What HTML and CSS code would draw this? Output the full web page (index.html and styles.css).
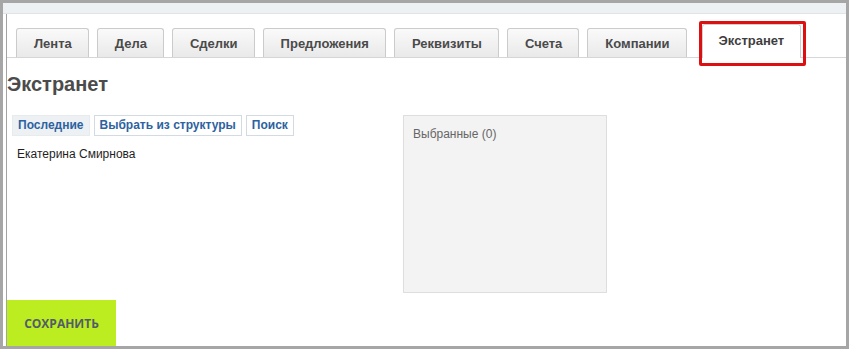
FILE: index.html
```html
<!DOCTYPE html>
<html lang="ru">
<head>
<meta charset="utf-8">
<title>Экстранет</title>
<link rel="stylesheet" href="styles.css">
</head>
<body>
<div class="window">
  <div class="topbar"></div>
  <div class="content">
    <div class="tabs">
      <div class="tab">Лента</div>
      <div class="tab">Дела</div>
      <div class="tab">Сделки</div>
      <div class="tab">Предложения</div>
      <div class="tab">Реквизиты</div>
      <div class="tab">Счета</div>
      <div class="tab">Компании</div>
      <div class="tab tab-active">Экстранет</div>
    </div>
    <h1 class="title">Экстранет</h1>
    <div class="selector">
      <div class="picker">
        <div class="modes">
          <span class="mode mode-active">Последние</span>
          <span class="mode">Выбрать из структуры</span>
          <span class="mode">Поиск</span>
        </div>
        <div class="person">Екатерина Смирнова</div>
      </div>
      <div class="chosen">Выбранные (0)</div>
    </div>
    <button class="save">СОХРАНИТЬ</button>
  </div>
</div>
</body>
</html>
```

FILE: styles.css
```css
* { box-sizing: border-box; }
html, body { margin: 0; padding: 0; background: #ffffff; }
body { font-family: "Liberation Sans", Arial, sans-serif; }

.window {
  width: 849px;
  height: 349px;
  border: 3px solid #a6a6a6;
  background: #ffffff;
  display: flex;
  flex-direction: column;
}

.topbar {
  height: 11px;
  background: #eef1f3;
  border-bottom: 1px solid #dfe4e7;
  flex: none;
}

.content {
  flex: 1;
  margin-left: 3px;
  border-left: 1px solid #a3a3a3;
  display: flex;
  flex-direction: column;
}

.tabs {
  height: 44px;
  flex: none;
  display: flex;
  align-items: flex-end;
  gap: 8px;
  padding-left: 9px;
  border-bottom: 1px solid #d4d7da;
}

.tab {
  height: 29px;
  line-height: 29px;
  padding: 0 16px 0 17px;
  border: 1px solid #cbcbcb;
  border-bottom: none;
  border-radius: 3px 3px 0 0;
  background: linear-gradient(#fafafa, #e9e9e9);
  font-size: 13px;
  font-weight: bold;
  color: #4a4a4a;
  white-space: nowrap;
}

.tab-active {
  position: relative;
  height: 34px;
  margin-bottom: -1px;
  margin-left: 7px;
  padding: 8px 16px 0 16px;
  line-height: 16px;
  background: #ffffff;
  border-color: #d0d0d0;
  color: #3e3e3e;
}

.tab-active::after {
  content: "";
  position: absolute;
  top: -4px;
  left: -4px;
  right: -6px;
  bottom: -8px;
  border: 3px solid #dc1010;
  border-radius: 2px;
}

.title {
  margin: 14px 0 0 0;
  height: 24px;
  font-size: 20px;
  line-height: 24px;
  font-weight: bold;
  color: #4b4b4b;
}

.selector {
  margin-top: 19px;
  height: 178px;
  flex: none;
  display: flex;
}

.picker {
  width: 396px;
  padding-left: 5px;
}

.modes {
  display: flex;
  gap: 4px;
  height: 21px;
}

.mode {
  height: 21px;
  line-height: 19px;
  padding: 0 5px;
  border: 1px solid #d2dbe1;
  background: #ffffff;
  font-size: 12px;
  font-weight: bold;
  color: #2c62a0;
}

.mode-active {
  background: #edf1f4;
  border-color: #e6ebee;
}

.person {
  margin-top: 10px;
  padding-left: 5px;
  font-size: 12px;
  line-height: 16px;
  color: #1f1f1f;
}

.chosen {
  width: 204px;
  height: 178px;
  background: #f3f3f3;
  border: 1px solid #dedede;
  padding: 10px 9px;
  font-size: 12px;
  line-height: 16px;
  color: #666666;
}

.save {
  margin-top: 7px;
  width: 109px;
  height: 46px;
  border: none;
  padding: 0;
  background: #bbed21;
  font-family: "Open Sans", sans-serif;
  font-size: 12px;
  font-weight: bold;
  color: #535c69;
  text-align: center;
}
```
